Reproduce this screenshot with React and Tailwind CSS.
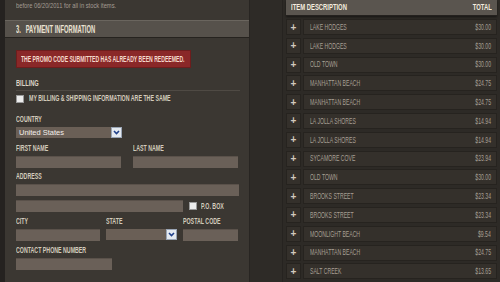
import React from "react";

const F = { fontFamily: '"Liberation Sans", Arial, sans-serif' };

// condensed text: the original uses a narrow display face, so squeeze Arial
function C({ children, className = "scale-x-[0.6]", right = false }) {
  return (
    <span
      className={`inline-block whitespace-nowrap ${right ? "origin-right" : "origin-left"} ${className}`}
    >
      {children}
    </span>
  );
}

function Label({ children }) {
  return (
    <div className="h-[9px] leading-[9px] text-[8.5px] font-bold text-[#d3cbbc]">
      <C className="scale-x-[0.62]">{children}</C>
    </div>
  );
}

function Input({ className = "" }) {
  return <div className={`h-[12px] bg-[#6a6058] border-t border-[#5a514a] ${className}`} />;
}

function Chevron() {
  return (
    <div className="w-[11px] h-[11px] bg-[#e4e9f0] border border-[#9aa5b5] flex items-center justify-center">
      <svg width="7" height="5" viewBox="0 0 7 5">
        <path d="M1 1 L3.5 3.5 L6 1" stroke="#1f3f8a" strokeWidth="1.6" fill="none" />
      </svg>
    </div>
  );
}

function Select({ text, className = "" }) {
  return (
    <div className={`h-[11px] bg-[#6a5f56] flex items-center justify-between ${className}`}>
      <span className="pl-[3px] text-[7.5px] leading-[11px] text-[#f2eeea]">{text}</span>
      <Chevron />
    </div>
  );
}

function Checkbox() {
  return <div className="w-[8px] h-[8px] bg-[#ececec] border border-[#9a9a9a] shrink-0" />;
}

const items = [
  ["LAKE HODGES", "$30.00"],
  ["LAKE HODGES", "$30.00"],
  ["OLD TOWN", "$30.00"],
  ["MANHATTAN BEACH", "$24.75"],
  ["MANHATTAN BEACH", "$24.75"],
  ["LA JOLLA SHORES", "$14.94"],
  ["LA JOLLA SHORES", "$14.94"],
  ["SYCAMORE COVE", "$23.94"],
  ["OLD TOWN", "$30.00"],
  ["BROOKS STREET", "$23.34"],
  ["BROOKS STREET", "$23.34"],
  ["MOONLIGHT BEACH", "$9.54"],
  ["MANHATTAN BEACH", "$24.75"],
  ["SALT CREEK", "$13.65"],
];

export default function App() {
  return (
    <div style={F} className="w-[500px] h-[282px] overflow-hidden flex bg-[#2d2a26]">
      {/* left dark edge */}
      <div className="w-[5px] bg-[#252220]" />

      {/* checkout form */}
      <div className="w-[245px] bg-[#3b3732] border-r border-[#282522]">
        <div className="h-[12px] pl-[11px] text-[8px] leading-[12px] text-[#a59d92]">
          <C className="scale-x-[0.72]">before 06/20/2011 for all in stock items.</C>
        </div>

        <div className="mt-[8px] h-[18px] bg-[#56514b] border-t border-[#6a655e] border-b border-b-[#26231f] flex items-center pl-[11px] text-[10px] text-[#ebe3d3] font-bold">
          <C className="scale-x-[0.58]">3.&nbsp;&nbsp; PAYMENT INFORMATION</C>
        </div>

        <div className="px-[11px]">
          <div className="mt-[12px] h-[18px] w-[175px] bg-[#8a2828] border border-[#6d1d1d] flex items-center pl-[4px] text-[8.5px] text-[#f4d8cc] font-bold">
            <C>THE PROMO CODE SUBMITTED HAS ALREADY BEEN REDEEMED.</C>
          </div>

          <div className="mt-[10px] h-[10px] leading-[10px] text-[9.5px] font-bold text-[#ddd5c6]">
            <C>BILLING</C>
          </div>
          <div className="mt-[2px] h-px w-[224px] bg-[#4f4a44]" />

          <div className="mt-[3px] flex items-center gap-[5px]">
            <Checkbox />
            <Label>MY BILLING &amp; SHIPPING INFORMATION ARE THE SAME</Label>
          </div>

          <div className="mt-[12px]">
            <Label>COUNTRY</Label>
            <Select text="United States" className="mt-[3px] w-[106px]" />
          </div>

          <div className="mt-[6px] flex gap-[12px]">
            <div className="w-[105px]">
              <Label>FIRST NAME</Label>
              <Input className="mt-[3px]" />
            </div>
            <div className="w-[106px]">
              <Label>LAST NAME</Label>
              <Input className="mt-[3px]" />
            </div>
          </div>

          <div className="mt-[4px]">
            <Label>ADDRESS</Label>
            <Input className="mt-[3px] w-[223px]" />
            <div className="mt-[4px] flex items-center">
              <Input className="w-[182px]" />
              <div className="ml-[6px]">
                <Checkbox />
              </div>
              <div className="ml-[4px]">
                <Label>P.O. BOX</Label>
              </div>
            </div>
          </div>

          <div className="mt-[5px] flex gap-[6px]">
            <div className="w-[84px]">
              <Label>CITY</Label>
              <Input className="mt-[3px]" />
            </div>
            <div className="w-[71px]">
              <Label>STATE</Label>
              <Select text="" className="mt-[3px]" />
            </div>
            <div className="w-[55px]">
              <Label>POSTAL CODE</Label>
              <Input className="mt-[3px]" />
            </div>
          </div>

          <div className="mt-[5px]">
            <Label>CONTACT PHONE NUMBER</Label>
            <Input className="mt-[3px] w-[96px]" />
          </div>

          <div className="mt-[11px] h-[10px] leading-[10px] text-[9.5px] font-bold text-[#ddd5c6]">
            <C>EMAIL ADDRESS</C>
          </div>
        </div>
      </div>

      {/* order summary */}
      <div className="w-[33px] border-r border-[#262320] bg-[#2e2b27]" />
      <div className="flex-1 pl-[3px] pr-[3px]">
        <div className="h-[16px] bg-[#5a554f] border-b border-[#24211e] shadow-[0_1px_2px_rgba(0,0,0,0.5)] flex items-center justify-between px-[5px] text-[9.5px] font-bold text-[#f3ecdf]">
          <C className="scale-x-[0.62]">ITEM DESCRIPTION</C>
          <C right className="scale-x-[0.62]">TOTAL</C>
        </div>
        <div className="mt-[3px] flex flex-col gap-[2.8px]">
          {items.map(([name, price], i) => (
            <div key={i} className="h-[16px] flex gap-[1.5px]">
              <div className="w-[15px] bg-[#34302b] border border-[#26231f] flex items-center justify-center text-[10px] font-bold text-[#d2cabe]">
                +
              </div>
              <div className="flex-1 bg-[#34302b] border border-[#26231f] flex items-center justify-between pl-[6px] pr-[5px] text-[9.5px] text-[#a79f93]">
                <C className="scale-x-[0.54]">{name}</C>
                <C right className="scale-x-[0.54]">{price}</C>
              </div>
            </div>
          ))}
        </div>
      </div>
    </div>
  );
}
